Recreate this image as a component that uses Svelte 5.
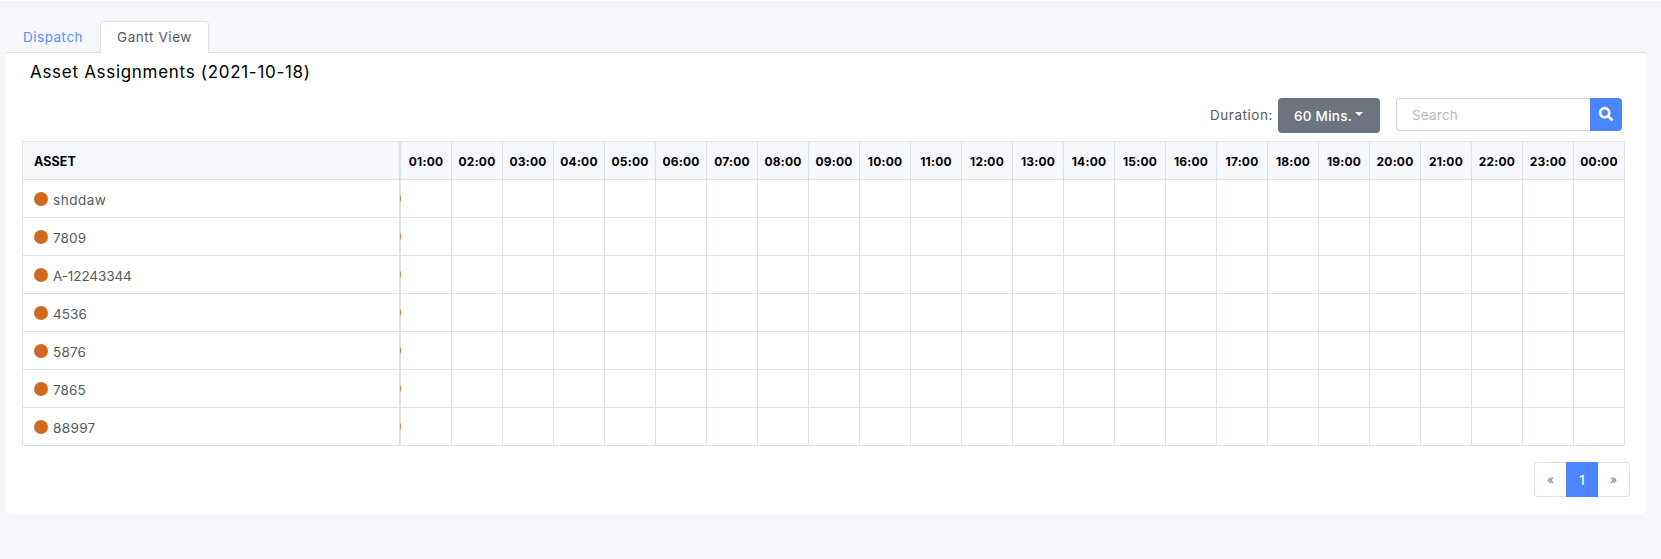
<script>
  const hours = Array.from({ length: 24 }, (_, i) => String((i + 1) % 24).padStart(2, '0') + ':00');
  const assets = [
    { name: 'shddaw', tracking: 0.52 },
    { name: '7809', tracking: 0.15 },
    { name: 'A-12243344', tracking: -0.1 },
    { name: '4536', tracking: 0.05 },
    { name: '5876', tracking: 0.2 },
    { name: '7865', tracking: 0.15 },
    { name: '88997', tracking: 0.35 }
  ];
</script>

<div class="page">
  <nav class="tabs">
    <a class="tab dispatch" href="#dispatch">Dispatch</a>
    <a class="tab active" href="#gantt">Gantt View</a>
  </nav>
  <main class="card">
    <h1><span>Asset Assignments (2021-10-18)</span></h1>
    <div class="toolbar">
      <span class="duration">Duration:</span>
      <button class="dropdown"><span>60 Mins.</span><i class="caret"></i></button>
      <div class="search">
        <input type="text" placeholder="Search" />
        <button class="go" aria-label="Search">
          <svg viewBox="0 0 512 512" width="14" height="14"><path fill="currentColor" stroke="currentColor" stroke-width="14" d="M505 442.7L405.300 343c-4.500-4.500-10.600-7-17-7H372c27.600-35.300 44-79.700 44-128C416 93.100 322.900 0 208 0S0 93.100 0 208s93.100 208 208 208c48.300 0 92.700-16.400 128-44v16.300c0 6.400 2.500 12.500 7 17l99.700 99.700c9.400 9.400 24.600 9.400 33.900 0l28.300-28.300c9.400-9.400 9.400-24.600.1-34zM208 336c-70.700 0-128-57.200-128-128 0-70.700 57.200-128 128-128 70.700 0 128 57.200 128 128 0 70.700-57.200 128-128 128z" /></svg>
        </button>
      </div>
    </div>
    <div class="grid">
      <div class="row head">
        <div class="asset"><span>ASSET</span></div>
        {#each hours as h}<div class="cell"><span>{h}</span></div>{/each}
      </div>
      {#each assets as a}
        <div class="row">
          <div class="asset"><i class="dot"></i><span style:letter-spacing="{a.tracking}px">{a.name}</span><i class="sliver"></i></div>
          {#each hours as h}<div class="cell"></div>{/each}
        </div>
      {/each}
    </div>
    <div class="pager">
      <button class="prev">«</button><button class="current">1</button><button class="next">»</button>
    </div>
  </main>
</div>

<style>
  :global(body) { background: #f5f7fb; }
  * { box-sizing: border-box; }
  .page {
    height: 559px;
    border-top: 1px solid #fff;
    padding: 20px 15px 0 6px;
    font: 14px/20px Inter, "Open Sans", sans-serif;
    color: #555b61;
    overflow: hidden;
  }
  .tabs { display: flex; height: 32px; border-bottom: 1px solid #dee2e6; }
  .tab {
    height: 32px;
    padding: 5px 0 0 16px;
    border: 1px solid transparent;
    border-bottom: 0;
    border-radius: 4px 4px 0 0;
    text-decoration: none;
    white-space: nowrap;
    font-size: 13.5px;
  }
  .dispatch { width: 94px; color: #5a91ff; letter-spacing: 0.5px; }
  .active { width: 109px; background: #fff; border-color: #dee2e6; color: #555b61; letter-spacing: 0.58px; }
  .card { height: 461px; background: #fff; border-radius: 4px; padding: 0 16px; }
  h1 {
    margin: 0;
    height: 45px;
    padding: 7px 0 0 8px;
    font-size: 17px;
    line-height: 24px;
    font-weight: 400;
    color: #000;
    white-space: nowrap;
    letter-spacing: 0.7px;
  }
  .toolbar { display: flex; align-items: flex-start; justify-content: flex-end; height: 43px; padding-right: 8px; }
  .duration { width: 68px; padding-top: 7px; font-size: 13.5px; letter-spacing: 0.55px; }
  button { font: inherit; margin: 0; padding: 0; border: 0; }
  .dropdown {
    display: flex;
    align-items: center;
    width: 102px;
    height: 35px;
    margin-right: 16px;
    padding-left: 16px;
    border-radius: 4px;
    background: #6c757d;
    color: #fff;
    font-size: 13.5px;
    font-weight: 500;
    letter-spacing: 0.25px;
    white-space: nowrap;
  }
  .dropdown span { width: 61px; text-align: left; }
  .caret { margin-top: -3px; border: 4px solid transparent; border-top-color: #fff; border-bottom: 0; }
  .search { display: flex; width: 226px; height: 33px; }
  input {
    width: 194px;
    height: 33px;
    padding: 1px 0 0 15px;
    border: 1px solid #ced4da;
    border-right: 0;
    border-radius: 4px 0 0 4px;
    font: 13.5px/20px Inter, sans-serif;
    letter-spacing: 0.2px;
  }
  input::placeholder { color: #b3bac1; }
  .go {
    display: flex;
    align-items: center;
    justify-content: center;
    width: 32px;
    height: 33px;
    padding-bottom: 2px;
    border-radius: 0 4px 4px 0;
    background: #4986ff;
    color: #fff;
  }
  .go svg { overflow: visible; }
  .grid { width: 1603px; border-top: 1px solid #dee2e6; }
  .row { display: grid; grid-template-columns: 379px repeat(24, 51px); height: 38px; }
  .head { background: #f5f7fb; color: #000; font-size: 12px; font-weight: 700; }
  .asset {
    position: relative;
    display: flex;
    align-items: center;
    gap: 5px;
    padding-left: 11px;
    border: 1px solid #dee2e6;
    border-top: 0;
    border-right-width: 2px;
    font-size: 13.5px;
  }
  .asset span { padding-top: 2px; }
  .head .asset { font-size: 12.5px; letter-spacing: 0.1px; }
  .head span { padding-top: 2px; }
  .cell {
    display: flex;
    align-items: center;
    justify-content: center;
    border-right: 1px solid #dee2e6;
    border-bottom: 1px solid #dee2e6;
  }
  .head .cell { letter-spacing: 0.2px; }
  .dot { width: 14px; height: 14px; margin-top: 1px; border-radius: 50%; background: #d2691e; }
  .sliver { position: absolute; right: -2px; top: 15px; width: 1px; height: 7px; background: linear-gradient(#dfc5b5, #d2844a 35%, #d2844a 65%, #dfc5b5); }
  .pager { display: flex; justify-content: flex-end; width: 1608px; height: 35px; margin-top: 16px; }
  .pager button { width: 32px; height: 35px; border: 1px solid #dee2e6; background: #fff; color: #6c757d; font-size: 12px; }
  .pager .prev { border-right: 0; border-radius: 4px 0 0 4px; }
  .pager .next { border-left: 0; border-radius: 0 4px 4px 0; }
  .pager .current { border: 0; background: #4986ff; color: #fff; font-size: 13px; font-weight: 500; }
</style>
